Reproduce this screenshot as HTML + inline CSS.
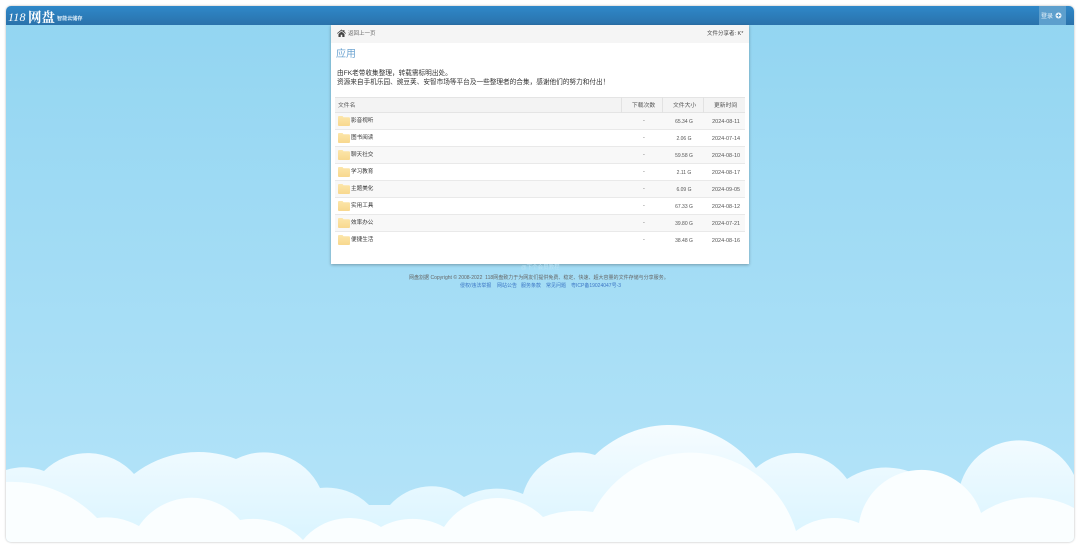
<!DOCTYPE html>
<html lang="zh"><head><meta charset="utf-8"><title>118网盘</title>
<style>
*{box-sizing:border-box;margin:0;padding:0}
html,body{width:1080px;height:548px;overflow:hidden;background:#fff}
body{position:relative;font-family:"Liberation Sans","Noto Sans CJK SC",sans-serif;color:#333}
.t{position:absolute;white-space:nowrap;line-height:10px;filter:blur(.25px)}
#frame{position:absolute;left:6px;top:6px;width:1068px;height:536px;border-radius:5px;overflow:hidden;background:linear-gradient(#92d5f1,#b5e4f9);box-shadow:0 0 2px rgba(0,0,0,.3)}
#head{position:absolute;left:6px;top:6px;width:1068px;height:19px;border-radius:5px 5px 0 0;background:linear-gradient(#2f88c9,#2a72ab)}
#login{position:absolute;left:1039px;top:6px;width:27px;height:19px;background:#5d9fcd}
#card{position:absolute;left:331px;top:25px;width:418px;height:239px;background:#fff;box-shadow:0 1px 3px rgba(0,0,0,.3)}
#bar{position:absolute;left:331px;top:25px;width:418px;height:18px;background:#f5f5f5}
.r{position:absolute;left:335px;width:410px;height:17px;border-bottom:1px solid #e9e9e9}
.o{background:#f8f8f8}
.th{position:absolute;left:335px;top:97px;width:410px;height:16px;background:#f3f3f3;border-top:1px solid #e4e4e4;border-bottom:1px solid #e4e4e4}
.sep{position:absolute;top:97px;width:1px;height:16px;background:#e2e2e2}
.f{position:absolute;left:338px;width:12px;height:10px}
.s{font-size:5.5px;color:#444}
.n{font-size:5.6px;color:#333;left:351px}
.d{font-size:5.5px;color:#555;left:643px}
.z{font-size:5px;color:#555;width:40px;left:664px;text-align:center}
.m{font-size:5.5px;color:#555;width:42px;left:705px;text-align:center}
.h{font-size:5.8px;color:#555}
.l{font-size:5px;color:#3a75c4;top:280.500px}
</style></head><body>
<div id="frame"></div>
<svg style="position:absolute;left:0;top:0" width="1080" height="548" viewBox="0 0 1080 548">
<defs>
<linearGradient id="b" gradientUnits="userSpaceOnUse" x1="0" y1="425" x2="0" y2="530"><stop offset="0" stop-color="#f6fcff"/><stop offset="1" stop-color="#dcf5ff"/></linearGradient>
</defs>
<path fill="url(#b)" d="M6 537V470A59 59 0 0 1 44 471A62 62 0 0 1 134 474A105 105 0 0 1 236 459A62 62 0 0 1 320 488A60 60 0 0 1 369 505L390 505A55 55 0 0 1 464 497A68 68 0 0 1 523 494A57 57 0 0 1 595 455A108 108 0 0 1 756 468A62 62 0 0 1 847 479A72 72 0 0 1 930 482.500L958 501A61 61 0 0 1 1074 475V537A5 5 0 0 1 1069 542H11A5 5 0 0 1 6 537Z"/>
<path fill="#fafeff" d="M6 537V482A118 118 0 0 1 97 518A69 69 0 0 1 139 526A63.500 63.500 0 0 1 240 520A70 70 0 0 1 303 540A60 60 0 0 1 381 527A65 65 0 0 1 444 527A64 64 0 0 1 543 517A100 100 0 0 1 593 512A110 110 0 0 1 796 531A63 63 0 0 1 859 523A63 63 0 0 1 981 513A90 90 0 0 1 1074 508V537A5 5 0 0 1 1069 542H11A5 5 0 0 1 6 537Z"/>
</svg>
<div id="head"></div>
<div class="t" style="left:8px;top:11px;font:italic 12px/12px 'Liberation Serif',serif;color:#fff;letter-spacing:.2px">118</div>
<div class="t" style="left:28px;top:9px;font:bold 13.500px/14px 'Noto Serif CJK SC',serif;color:#fff">网盘</div>
<div class="t" style="left:57px;top:14px;font-size:5.100px;color:#dcecf7;font-weight:bold">智能云储存</div>
<div id="login"></div>
<div class="t" style="left:1041px;top:11.500px;font-size:6px;color:#e8f2f9">登录</div>
<svg style="position:absolute;left:1055px;top:12px" width="7" height="7" viewBox="0 0 7 7"><circle cx="3.500" cy="3.500" r="3" fill="#e8f2f9"/><path d="M3.500 1.700v3.600M1.700 3.500h3.600" stroke="#5d9fcd" stroke-width="1"/></svg>

<div id="card"></div><div id="bar"></div>
<svg style="position:absolute;left:337px;top:29px" width="9" height="8" viewBox="0 0 9 8"><path d="M4.500 .5L0 4.200l.5.600L4.500 1.600l4 3.200.5-.6-1.600-1.300V1H6.300v1L4.500.5zM1.500 5v3h2.200V5.700h1.600V8h2.200V5L4.500 2.500z" fill="#444"/></svg>
<div class="t s" style="left:348px;top:29px;color:#666">返回上一页</div>
<div class="t s" style="left:707px;top:29px">文件分享者: K*</div>
<div class="t" style="left:336px;top:50px;font-size:10px;color:#6fa5d2">应用</div>
<div class="t" style="left:337px;top:68.500px;font-size:6.650px;color:#333">由FK老带收集整理，转载需标明出处。</div>
<div class="t" style="left:337px;top:77.500px;font-size:6.650px;color:#333">资源来自手机乐园、豌豆荚、安智市场等平台及一些整理者的合集，感谢他们的努力和付出！</div>

<div class="th"></div>
<div class="sep" style="left:621px"></div><div class="sep" style="left:662px"></div><div class="sep" style="left:703px"></div>
<div class="t h" style="left:338px;top:100.500px">文件名</div>
<div class="t h" style="left:632px;top:100.500px">下载次数</div>
<div class="t h" style="left:673px;top:100.500px">文件大小</div>
<div class="t h" style="left:714px;top:100.500px">更新时间</div>

<div class="r o" style="top:113px"></div><div class="r" style="top:130px"></div>
<div class="r o" style="top:147px"></div><div class="r" style="top:164px"></div>
<div class="r o" style="top:181px"></div><div class="r" style="top:198px"></div>
<div class="r o" style="top:215px"></div><div class="r" style="top:232px;border:0"></div>

<svg width="0" height="0" style="position:absolute"><defs><linearGradient id="fg" x1="0" y1="0" x2="0" y2="1"><stop offset="0" stop-color="#fce6aa"/><stop offset="1" stop-color="#f8d88e"/></linearGradient><symbol id="fo" viewBox="0 0 12 10"><path d="M0 1Q0 0 1 0H4.500L5.500 1.200H11Q12 1.200 12 2.200V9Q12 10 11 10H1Q0 10 0 9Z" fill="url(#fg)"/></symbol></defs></svg>
<svg class="f" style="top:116px"><use href="#fo"/></svg>
<svg class="f" style="top:133px"><use href="#fo"/></svg>
<svg class="f" style="top:150px"><use href="#fo"/></svg>
<svg class="f" style="top:167px"><use href="#fo"/></svg>
<svg class="f" style="top:184px"><use href="#fo"/></svg>
<svg class="f" style="top:201px"><use href="#fo"/></svg>
<svg class="f" style="top:218px"><use href="#fo"/></svg>
<svg class="f" style="top:235px"><use href="#fo"/></svg>

<div class="t n" style="top:116px">影音视听</div><div class="t d" style="top:116px">-</div><div class="t z" style="top:116.500px">65.34 G</div><div class="t m" style="top:116.500px">2024-08-11</div>
<div class="t n" style="top:133px">图书阅读</div><div class="t d" style="top:133px">-</div><div class="t z" style="top:133.500px">2.06 G</div><div class="t m" style="top:133.500px">2024-07-14</div>
<div class="t n" style="top:150px">聊天社交</div><div class="t d" style="top:150px">-</div><div class="t z" style="top:150.500px">59.58 G</div><div class="t m" style="top:150.500px">2024-08-10</div>
<div class="t n" style="top:167px">学习教育</div><div class="t d" style="top:167px">-</div><div class="t z" style="top:167.500px">2.11 G</div><div class="t m" style="top:167.500px">2024-08-17</div>
<div class="t n" style="top:184px">主题美化</div><div class="t d" style="top:184px">-</div><div class="t z" style="top:184.500px">6.09 G</div><div class="t m" style="top:184.500px">2024-09-05</div>
<div class="t n" style="top:201px">实用工具</div><div class="t d" style="top:201px">-</div><div class="t z" style="top:201.500px">67.33 G</div><div class="t m" style="top:201.500px">2024-08-12</div>
<div class="t n" style="top:218px">效率办公</div><div class="t d" style="top:218px">-</div><div class="t z" style="top:218.500px">39.80 G</div><div class="t m" style="top:218.500px">2024-07-21</div>
<div class="t n" style="top:235px">便捷生活</div><div class="t d" style="top:235px">-</div><div class="t z" style="top:235.500px">38.48 G</div><div class="t m" style="top:235.500px">2024-08-16</div>

<div class="t" style="left:521px;top:263px;font-size:5.500px;color:#b8e2f5">@下个会员教程</div>
<div class="t" style="left:409px;top:272.500px;font-size:5.030px;color:#666">网盘割据 Copyright © 2008-2022&nbsp; 118网盘致力于为网友们提供免费、稳定、快速、超大容量的文件存储与分享服务。</div>
<div class="t l" style="left:460px">侵权/违法举报</div>
<div class="t l" style="left:497px">网站公告</div>
<div class="t l" style="left:521px">服务条款</div>
<div class="t l" style="left:546px">常见问题</div>
<div class="t l" style="left:571px">粤ICP备19024047号-3</div>
</body></html>
